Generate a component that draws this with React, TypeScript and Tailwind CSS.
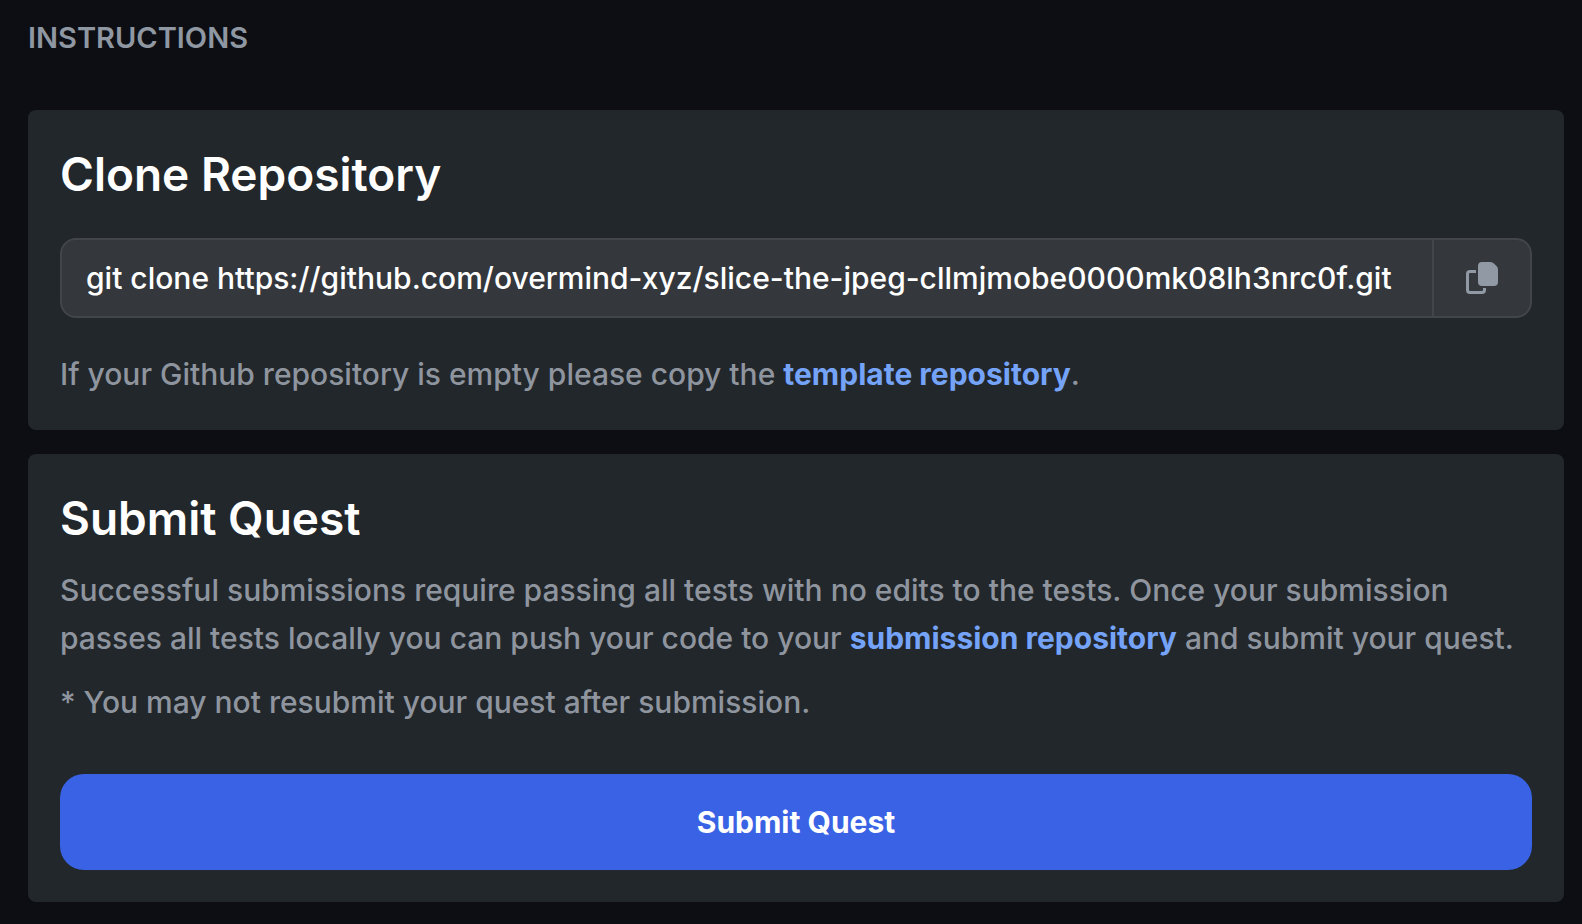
import { useState } from 'react';
import type { ReactNode } from 'react';

const CLONE_COMMAND =
  'git clone https://github.com/overmind-xyz/slice-the-jpeg-cllmjmobe0000mk08lh3nrc0f.git';

function CopyIcon() {
  return (
    <svg viewBox="0 0 32 32" className="size-8" aria-hidden="true">
      <path
        fill="currentColor"
        d="M16 0h8.3a5 5 0 0 1 3.6 1.5l2.6 2.6A5 5 0 0 1 32 7.7V20a4 4 0 0 1-4 4H16a4 4 0 0 1-4-4V4a4 4 0 0 1 4-4Z"
      />
      <path
        fill="none"
        stroke="currentColor"
        strokeWidth="3"
        d="M10 9.5H4A2.5 2.5 0 0 0 1.500 12v16A2.500 2.500 0 0 0 4 30.500h12A2.500 2.500 0 0 0 18.500 28v-2"
      />
    </svg>
  );
}

function Card({ title, children }: { title: string; children: ReactNode }) {
  return (
    <section className="rounded-lg bg-[#22272b] p-8">
      <h2 className="text-[46px] leading-16 font-semibold text-white">{title}</h2>
      {children}
    </section>
  );
}

function TextLink({ href, children }: { href: string; children: ReactNode }) {
  return (
    <a href={href} className="font-bold text-[#74a3f8] hover:underline">
      {children}
    </a>
  );
}

export default function App() {
  const [command] = useState(CLONE_COMMAND);

  return (
    <main className="min-h-screen bg-[#0d0e13] pt-3.5 pr-[18px] pb-[22px] pl-7 font-['Inter','Liberation_Sans',sans-serif] text-[30px] leading-12 font-medium text-[#8f959f]">
      <h1 className="text-[29px] font-semibold text-[#8f98a2]">INSTRUCTIONS</h1>

      <div className="mt-12 flex flex-col gap-6">
        <Card title="Clone Repository">
          <div className="mt-8 flex h-20 overflow-hidden rounded-2xl border-2 border-[#42464a] bg-[#34373c]">
            <input
              type="text"
              readOnly
              aria-label="Clone command"
              value={command}
              className="min-w-0 flex-1 bg-transparent px-6 text-white outline-none"
            />
            <button
              type="button"
              aria-label="Copy clone command"
              onClick={() => navigator.clipboard?.writeText(command)}
              className="flex w-[98px] items-center justify-center border-l-2 border-[#42464a] text-[#9199a5]"
            >
              <CopyIcon />
            </button>
          </div>
          <p className="mt-8">
            If your Github repository is empty please copy the{' '}
            <TextLink href="#template">template repository</TextLink>.
          </p>
        </Card>

        <Card title="Submit Quest">
          <p className="mt-4">
            Successful submissions require passing all tests with no edits to the tests. Once your
            submission passes all tests locally you can push your code to your{' '}
            <TextLink href="#submission">submission repository</TextLink> and submit your quest.
          </p>
          <p className="mt-4">* You may not resubmit your quest after submission.</p>
          <button
            type="button"
            className="mt-12 h-24 w-full rounded-3xl bg-[#3962e4] font-bold text-white"
          >
            Submit Quest
          </button>
        </Card>
      </div>
    </main>
  );
}
